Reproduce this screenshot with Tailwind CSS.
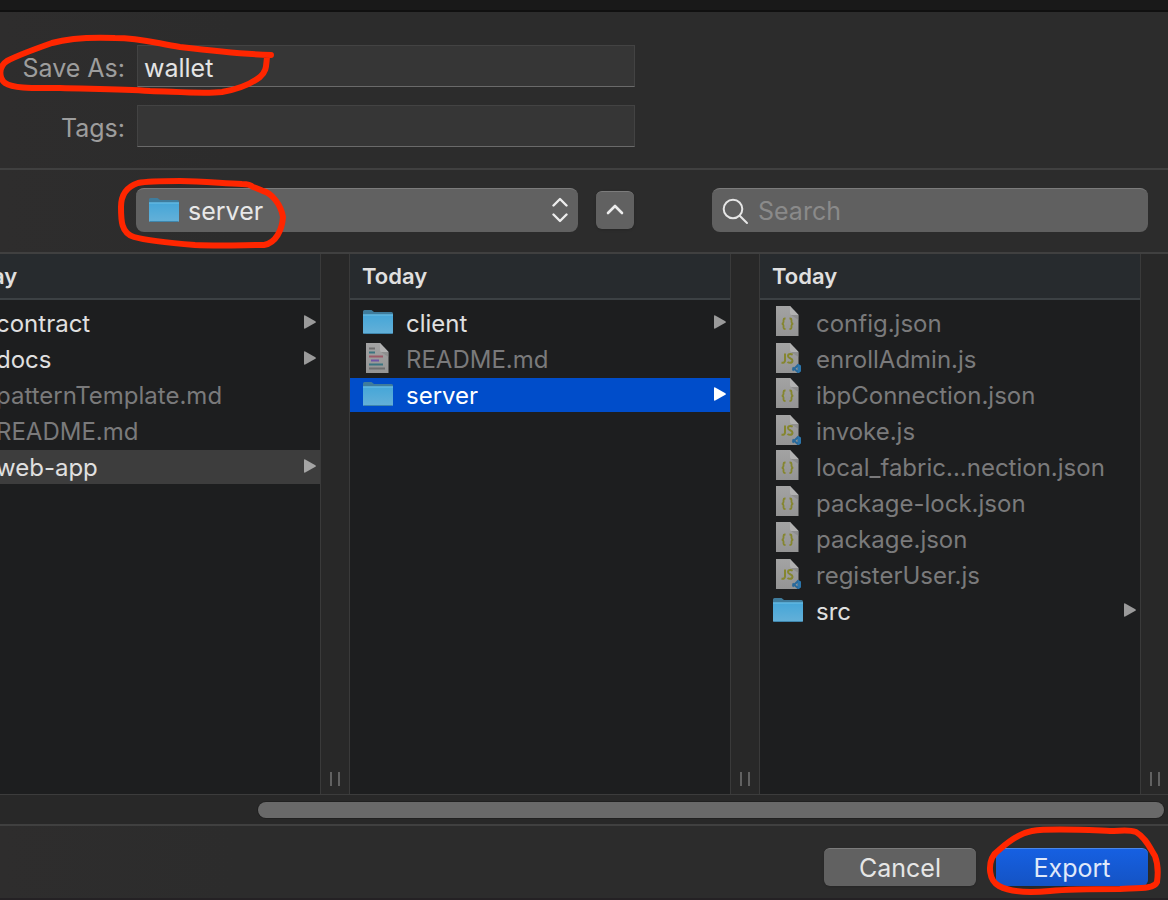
<!DOCTYPE html>
<html lang="en">
<head>
<meta charset="utf-8">
<meta name="viewport" content="width=device-width, initial-scale=1">
<title>Save dialog</title>
<script src="https://cdn.jsdelivr.net/npm/@tailwindcss/browser@4"></script>
</head>
<body class="flex min-h-screen flex-col overflow-x-hidden bg-[#2c2c2c] font-['Inter','Liberation_Sans',sans-serif] text-[24px] leading-8 text-[#e0e0e0]">

<svg class="absolute h-0 w-0" aria-hidden="true">
  <defs>
    <linearGradient id="front" x1="0" y1="0" x2="0" y2="1"><stop offset="0" stop-color="#45a6d8"/><stop offset="1" stop-color="#64b0d8"/></linearGradient>
    <linearGradient id="paper" x1="0" y1="0" x2="0" y2="1"><stop offset="0" stop-color="#a3a3a3"/><stop offset="1" stop-color="#949494"/></linearGradient>
  </defs>
  <symbol id="folder" viewBox="0 0 32 26">
    <path d="M1 24V2.500Q1 1 2.500 1H9.500L12 3H29.500Q31 3 31 4.500V24Z" fill="#3f7c9c"/>
    <path d="M1 5.500H31V23.500Q31 25 29.500 25H2.500Q1 25 1 23.500Z" fill="url(#front)"/>
    <path d="M1 6H31" stroke="#6fc0e6"/>
    <path d="M2 24.500H30" stroke="#3f86ad"/>
  </symbol>
  <symbol id="sheet" viewBox="0 0 28 30">
    <path d="M2 0H16L24.500 9V30H2Z" fill="url(#paper)"/>
    <path d="M16 0L24.500 9H17.500Q16 9 16 7Z" fill="#b2b2b2"/>
    <path d="M17 9H24.500V14Z" fill="#808080" opacity=".5"/>
  </symbol>
  <symbol id="markdown" viewBox="0 0 28 30">
    <use href="#sheet" width="28" height="30"/>
    <path d="M5 5.500H11M5 25.500H21" stroke="#6e6e6e" stroke-width="2"/>
    <path d="M5 9.500H11M5 21.500H19" stroke="#3b7480" stroke-width="2"/>
    <path d="M5 13.500H19" stroke="#9b5967" stroke-width="2"/>
    <path d="M7 17.500H15" stroke="#6f55a5" stroke-width="2"/>
  </symbol>
  <symbol id="json" viewBox="0 0 28 32">
    <use href="#sheet" width="28" height="30"/>
    <path d="M11.500 12.500H11Q9.500 12.500 9.500 14V16Q9.500 17.500 7.800 17.800Q9.500 18 9.500 19.500V21.500Q9.500 23 11 23H11.500M15.500 12.500H16Q17.500 12.500 17.500 14V16Q17.500 17.500 19.200 17.800Q17.500 18 17.500 19.500V21.500Q17.500 23 16 23H15.500" fill="none" stroke="#85862f" stroke-width="1.800"/>
  </symbol>
  <symbol id="js" viewBox="0 0 28 30">
    <use href="#sheet" width="28" height="30"/>
    <path d="M11 10.500V17.500Q11 20 7.500 19.700M18.700 11.700Q17.500 11 16.200 11Q14 11 14 13Q14 14.400 16.200 15.200Q18.500 16 18.500 17.700Q18.500 19.800 16 19.800Q14.500 19.800 13.500 19" fill="none" stroke="#85862f" stroke-width="2"/>
    <path d="M24.500 21.500V29.500L18.500 24.500M24.500 21.500L18.500 27.500" fill="none" stroke="#28699b" stroke-width="2"/>
    <path d="M24 21L27 22.500V28.500L24 30Z" fill="#2b75ab"/>
  </symbol>
  <symbol id="tri" viewBox="0 0 12 14"><path d="M0 1.200Q0 0 1.200 .500L11.400 6.200Q12.300 7 11.400 7.800L1.200 13.500Q0 14 0 12.800Z" fill="currentColor"/></symbol>
</svg>

<div class="h-3 shrink-0 border-b-2 border-[#101010] bg-[#191919]"></div>

<section class="relative flex flex-col gap-[18px] border-b-2 border-[#404040] bg-linear-to-r from-[#2e2d2d] to-[#2c2c2c] to-20% pt-[33px] pb-[21px] text-[25px]">
  <div class="flex items-center gap-3">
    <label for="name" class="w-[125px] shrink-0 pt-1 text-right text-[#9d9d9d]">Save As:</label>
    <input id="name" type="text" value="wallet" class="h-[42px] w-full max-w-[498px] min-w-0 border border-[#434343] border-b-[#6a6a6a] bg-[#363636] px-1.5 pt-1 text-[#e4e4e4] outline-none">
  </div>
  <div class="flex items-center gap-3">
    <label for="tags" class="w-[125px] shrink-0 pt-1 text-right text-[#9d9d9d]">Tags:</label>
    <input id="tags" type="text" class="h-[42px] w-full max-w-[498px] min-w-0 border border-[#434343] border-b-[#6a6a6a] bg-[#363636] px-1.5 outline-none">
  </div>
  <svg class="pointer-events-none absolute top-0 left-0" width="290" height="100" viewBox="0 12 290 100" fill="none" stroke="#ff2600" stroke-width="6" stroke-linecap="round" stroke-linejoin="round" aria-hidden="true"><path d="M271 55C240 54 205 50 180 47C155 43 140 38 115 38C90 37 70 38 52 43C35 49 18 55 7 61C-2 67 -1 78 5 83C14 89 35 88 60 88C90 89 120 89 150 91C180 92 205 94 222 92C240 89 252 83 260 77C267 71 266 65 267 57"/></svg>
</section>

<section class="relative flex h-[84px] shrink-0 items-center border-b-2 border-[#404040] bg-linear-to-r from-[#2e2d2d] to-[#2c2c2c] to-20% pr-5 pb-0.5 pl-[136px] text-[25px]">
  <div class="relative min-w-0 flex-[442_1_0%]">
    <select aria-label="Folder" class="block h-11 w-full appearance-none rounded-lg border-t border-[#7c7c7c] bg-[#616161] pl-[52px] text-[#e8e8e8] outline-none"><option>server</option></select>
    <svg class="pointer-events-none absolute top-[9px] left-3 h-[26px] w-8" aria-hidden="true"><use href="#folder"/></svg>
    <svg class="pointer-events-none absolute top-2 right-2.5 h-7 w-4" viewBox="0 0 16 28" fill="none" stroke="#ececec" stroke-width="2.400" stroke-linecap="round" stroke-linejoin="round" aria-hidden="true"><path d="M1.500 9.500L8 3L14.500 9.500M1.500 18.500L8 25L14.500 18.500"/></svg>
  </div>
  <button type="button" aria-label="Collapse" class="ml-[18px] flex h-[38px] w-[38px] shrink-0 items-center justify-center rounded-md border-t border-[#7c7c7c] bg-[#616161] pb-0.5 shadow-sm">
    <svg width="18" height="12" viewBox="0 0 18 12" fill="none" stroke="#ececec" stroke-width="2.600" stroke-linecap="round" stroke-linejoin="round" aria-hidden="true"><path d="M2 9L9 2L16 9"/></svg>
  </button>
  <div class="relative ml-[78px] min-w-0 flex-[436_1_0%]">
    <input type="search" aria-label="Search" placeholder="Search" class="block h-11 w-full appearance-none rounded-lg border-t border-[#7c7c7c] bg-[#606060] pl-[46px] outline-none placeholder:text-[#8a8a8a]">
    <svg class="pointer-events-none absolute top-2.5 left-2.5" width="28" height="28" viewBox="0 0 28 28" fill="none" stroke="#e6e6e6" stroke-width="2" stroke-linecap="round" aria-hidden="true"><circle cx="11" cy="11" r="9.300"/><path d="M17.700 17.700L25 25"/></svg>
  </div>
  <svg class="pointer-events-none absolute top-0 left-[110px]" width="180" height="82" viewBox="110 170 180 82" fill="none" stroke="#ff2600" stroke-width="6" stroke-linecap="round" stroke-linejoin="round" aria-hidden="true"><path d="M253 187C250 184 246 184 242 184C220 183 200 181 180 181C165 181 148 181 138 183C126 187 121 195 121 207C121 220 121 233 134 237C148 241 170 243 195 245C220 246 245 245 264 245C276 243 282 230 283 217C281 205 272 193 263 191C258 189 256 188 253 187"/></svg>
</section>

<main class="flex min-h-[540px] grow justify-end overflow-hidden bg-[#1d1e1f]">
  <section class="w-[380px] shrink-0">
    <h2 class="h-[46px] border-b-2 border-[#3c4144] bg-[#272b2e] pt-1.5 pl-3 text-[22px] font-semibold">Today</h2>
    <ul class="flex flex-col gap-0.5 pt-1.5">
      <li><button type="button" class="flex h-[34px] w-full items-center pr-1 pb-0.5 pl-3 text-left"><svg class="h-[26px] w-8" aria-hidden="true"><use href="#folder"/></svg><span class="ml-3 grow pt-1">contract</span><svg class="h-3.5 w-3 text-[#9a9a9a]" aria-hidden="true"><use href="#tri"/></svg></button></li>
      <li><button type="button" class="flex h-[34px] w-full items-center pr-1 pb-0.5 pl-3 text-left"><svg class="h-[26px] w-8" aria-hidden="true"><use href="#folder"/></svg><span class="ml-3 grow pt-1">docs</span><svg class="h-3.5 w-3 text-[#9a9a9a]" aria-hidden="true"><use href="#tri"/></svg></button></li>
      <li><button type="button" disabled class="flex h-[34px] w-full items-center pr-1 pb-0.5 pl-3 text-left text-[#7a7a7b]"><svg class="ml-0.5 h-[30px] w-7" aria-hidden="true"><use href="#markdown"/></svg><span class="ml-3.5 grow pt-1">patternTemplate.md</span></button></li>
      <li><button type="button" disabled class="flex h-[34px] w-full items-center pr-1 pb-0.5 pl-3 text-left text-[#7a7a7b]"><svg class="ml-0.5 h-[30px] w-7" aria-hidden="true"><use href="#markdown"/></svg><span class="ml-3.5 grow pt-1">README.md</span></button></li>
      <li><button type="button" class="flex h-[34px] w-full items-center bg-[#3d3d3d] pr-1 pb-0.5 pl-3 text-left"><svg class="h-[26px] w-8" aria-hidden="true"><use href="#folder"/></svg><span class="ml-3 grow pt-1">web-app</span><svg class="h-3.5 w-3 text-[#a5a5a5]" aria-hidden="true"><use href="#tri"/></svg></button></li>
    </ul>
  </section>
  <div class="flex w-[30px] shrink-0 items-end justify-center gap-1.5 border-x border-[#3a3a3a] bg-[#282828] pb-2"><i class="h-3.5 w-0.5 bg-[#616161]"></i><i class="h-3.5 w-0.5 bg-[#616161]"></i></div>

  <section class="w-[380px] shrink-0">
    <h2 class="h-[46px] border-b-2 border-[#3c4144] bg-[#272b2e] pt-1.5 pl-3 text-[22px] font-semibold">Today</h2>
    <ul class="flex flex-col gap-0.5 pt-1.5">
      <li><button type="button" class="flex h-[34px] w-full items-center pr-1 pb-0.5 pl-3 text-left"><svg class="h-[26px] w-8" aria-hidden="true"><use href="#folder"/></svg><span class="ml-3 grow pt-1">client</span><svg class="h-3.5 w-3 text-[#9a9a9a]" aria-hidden="true"><use href="#tri"/></svg></button></li>
      <li><button type="button" disabled class="flex h-[34px] w-full items-center pr-1 pb-0.5 pl-3 text-left text-[#7a7a7b]"><svg class="ml-0.5 h-[30px] w-7" aria-hidden="true"><use href="#markdown"/></svg><span class="ml-3.5 grow pt-1">README.md</span></button></li>
      <li><button type="button" class="flex h-[34px] w-full items-center bg-[#004dca] pr-1 pb-0.5 pl-3 text-left text-white"><svg class="h-[26px] w-8" aria-hidden="true"><use href="#folder"/></svg><span class="ml-3 grow pt-1">server</span><svg class="h-3.5 w-3" aria-hidden="true"><use href="#tri"/></svg></button></li>
    </ul>
  </section>
  <div class="flex w-[30px] shrink-0 items-end justify-center gap-1.5 border-x border-[#3a3a3a] bg-[#282828] pb-2"><i class="h-3.5 w-0.5 bg-[#616161]"></i><i class="h-3.5 w-0.5 bg-[#616161]"></i></div>

  <section class="w-[380px] shrink-0">
    <h2 class="h-[46px] border-b-2 border-[#3c4144] bg-[#272b2e] pt-1.5 pl-3 text-[22px] font-semibold">Today</h2>
    <ul class="flex flex-col gap-0.5 pt-1.5">
      <li><button type="button" disabled class="flex h-[34px] w-full items-center pr-1 pb-0.5 pl-3 text-left text-[#7a7a7b]"><svg class="ml-0.5 h-8 w-7" aria-hidden="true"><use href="#json"/></svg><span class="ml-3.5 grow pt-1">config.json</span></button></li>
      <li><button type="button" disabled class="flex h-[34px] w-full items-center pr-1 pb-0.5 pl-3 text-left text-[#7a7a7b]"><svg class="ml-0.5 h-[30px] w-7" aria-hidden="true"><use href="#js"/></svg><span class="ml-3.5 grow pt-1">enrollAdmin.js</span></button></li>
      <li><button type="button" disabled class="flex h-[34px] w-full items-center pr-1 pb-0.5 pl-3 text-left text-[#7a7a7b]"><svg class="ml-0.5 h-8 w-7" aria-hidden="true"><use href="#json"/></svg><span class="ml-3.5 grow pt-1">ibpConnection.json</span></button></li>
      <li><button type="button" disabled class="flex h-[34px] w-full items-center pr-1 pb-0.5 pl-3 text-left text-[#7a7a7b]"><svg class="ml-0.5 h-[30px] w-7" aria-hidden="true"><use href="#js"/></svg><span class="ml-3.5 grow pt-1">invoke.js</span></button></li>
      <li><button type="button" disabled class="flex h-[34px] w-full items-center pr-1 pb-0.5 pl-3 text-left text-[#7a7a7b]"><svg class="ml-0.5 h-8 w-7" aria-hidden="true"><use href="#json"/></svg><span class="ml-3.5 grow pt-1 whitespace-nowrap">local_fabric...nection.json</span></button></li>
      <li><button type="button" disabled class="flex h-[34px] w-full items-center pr-1 pb-0.5 pl-3 text-left text-[#7a7a7b]"><svg class="ml-0.5 h-8 w-7" aria-hidden="true"><use href="#json"/></svg><span class="ml-3.5 grow pt-1">package-lock.json</span></button></li>
      <li><button type="button" disabled class="flex h-[34px] w-full items-center pr-1 pb-0.5 pl-3 text-left text-[#7a7a7b]"><svg class="ml-0.5 h-8 w-7" aria-hidden="true"><use href="#json"/></svg><span class="ml-3.5 grow pt-1">package.json</span></button></li>
      <li><button type="button" disabled class="flex h-[34px] w-full items-center pr-1 pb-0.5 pl-3 text-left text-[#7a7a7b]"><svg class="ml-0.5 h-[30px] w-7" aria-hidden="true"><use href="#js"/></svg><span class="ml-3.5 grow pt-1">registerUser.js</span></button></li>
      <li><button type="button" class="flex h-[34px] w-full items-center pr-1 pb-0.5 pl-3 text-left"><svg class="h-[26px] w-8" aria-hidden="true"><use href="#folder"/></svg><span class="ml-3 grow pt-1">src</span><svg class="h-3.5 w-3 text-[#9a9a9a]" aria-hidden="true"><use href="#tri"/></svg></button></li>
    </ul>
  </section>
  <div class="flex w-7 shrink-0 items-end justify-center gap-1.5 border-l border-[#3a3a3a] bg-[#282828] pb-2"><i class="h-3.5 w-0.5 bg-[#616161]"></i><i class="h-3.5 w-0.5 bg-[#616161]"></i></div>
</main>

<div class="flex h-8 shrink-0 items-center justify-end border-t border-b-2 border-t-[#3c3c3c] border-b-[#404040] bg-[#282828] pr-1">
  <div class="h-4 w-[906px] rounded-full bg-[#696969] ring-1 ring-[#202020]"></div>
</div>

<footer class="relative flex h-[74px] shrink-0 items-start justify-end gap-5 bg-linear-to-r from-[#2e2d2d] to-[#2c2c2c] to-20% pt-[22px] pr-5">
  <button type="button" class="h-[38px] w-[152px] rounded-md border-t border-[#7c7c7c] bg-[#616161] text-[25px] text-[#e6e6e6] shadow-sm">Cancel</button>
  <button type="button" class="h-[38px] w-[152px] rounded-md border-t border-[#4a86ea] bg-linear-to-b from-[#1660e2] to-[#1453c4] text-[25px] text-[#e0e9fa] shadow-sm">Export</button>
  <svg class="pointer-events-none absolute right-0 bottom-0" width="188" height="74" viewBox="980 826 188 74" fill="none" stroke="#ff2600" stroke-width="6" stroke-linecap="round" stroke-linejoin="round" aria-hidden="true"><path d="M999 850C1009 841 1020 833 1032 831C1050 828 1085 830 1110 831C1121 831 1128 829 1136 832C1145 837 1150 848 1155 856C1158 864 1158 875 1157 882C1154 889 1140 888 1120 889C1095 889 1070 889 1050 891C1030 893 1010 892 999 886C988 880 989 865 992 858C994 854 996 852 999 850"/></svg>
  <div class="absolute inset-x-0 bottom-0 h-0.5 bg-[#242124]"></div>
</footer>
</body>
</html>
